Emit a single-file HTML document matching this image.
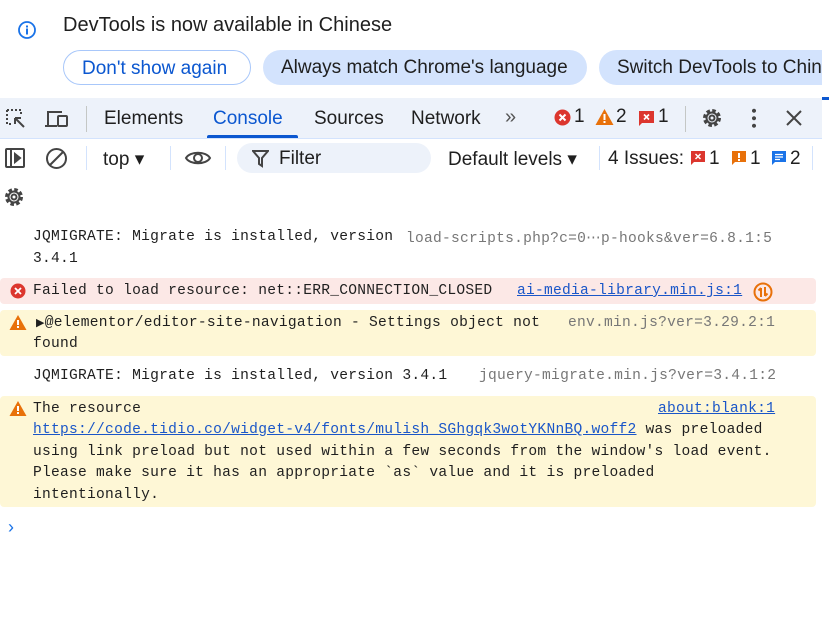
<!DOCTYPE html>
<html><head><meta charset="utf-8"><style>
body{margin:0;width:829px;height:633px;overflow:hidden;background:#fff;font-family:"Liberation Sans",sans-serif;position:relative}
.a{position:absolute;white-space:nowrap}
.ui{font-size:18px;color:#1f1f1f}
.pill{position:absolute;top:50px;height:35px;border-radius:18px;font-size:19px;line-height:35px;box-sizing:border-box;padding:0 18px;white-space:nowrap}
.mono{font-family:"Liberation Mono",monospace;font-size:14.6px;letter-spacing:0.25px;color:#1f1f1f}
.src{color:#777}
.lnk{color:#1a56c8;text-decoration:underline}
.row{position:absolute;left:0;width:816px}
</style></head><body>
<svg width="0" height="0" style="position:absolute"><defs><g id="gear"><circle cx="12" cy="12" r="7" fill="none" stroke="#444" stroke-width="4" stroke-dasharray="3.3 2.2"/><circle cx="12" cy="12" r="5.5" fill="none" stroke="#444" stroke-width="2"/><circle cx="12" cy="12" r="2.5" fill="none" stroke="#444" stroke-width="2"/></g></defs></svg>
<!-- infobar -->
<svg class="a" style="left:17px;top:20px" width="20" height="20" viewBox="0 0 20 20"><circle cx="10" cy="10" r="8" fill="none" stroke="#1a73e8" stroke-width="1.8"/><rect x="9" y="8.5" width="2" height="6" fill="#1a73e8"/><rect x="9" y="5.5" width="2" height="2" fill="#1a73e8"/></svg>
<div class="a" style="left:63px;top:14px;font-size:20px;color:#1f1f1f">DevTools is now available in Chinese</div>
<div class="pill" style="left:63px;width:188px;border:1px solid #a8c7fa;color:#0b57d0">Don't show again</div>
<div class="pill" style="left:263px;width:324px;background:#d3e3fd;color:#1f1f1f">Always match Chrome's language</div>
<div class="pill" style="left:599px;width:260px;background:#d3e3fd;color:#1f1f1f">Switch DevTools to Chinese</div>
<div class="a" style="left:822px;top:0;width:7px;height:97px;background:#fff"></div>
<div class="a" style="left:822px;top:97px;width:7px;height:3px;background:#0b57d0"></div>
<!-- tab bar -->
<div class="a" style="left:0;top:98px;width:822px;height:40px;background:#edf2fa;border-bottom:1px solid #d3e3fd"></div>
<svg class="a" style="left:4px;top:107px" width="24" height="24" viewBox="0 0 24 24" fill="none" stroke="#444" stroke-width="2"><path d="M3 3h14v6M3 3v14h6" stroke-dasharray="2 2"/><path d="M11 11l9 9M11 11h6M11 11v6"/></svg>
<svg class="a" style="left:44px;top:107px" width="26" height="24" viewBox="0 0 26 24" fill="none" stroke="#444" stroke-width="2"><path d="M4 19V5h14"/><path d="M1 19h12"/><rect x="14" y="9" width="9" height="10" rx="1"/></svg>
<div class="a" style="left:86px;top:106px;width:1px;height:26px;background:#c4c7c5"></div>
<div class="a ui" style="left:104px;top:108px;font-size:19px">Elements</div>
<div class="a ui" style="left:213px;top:108px;font-size:19px;color:#0b57d0">Console</div>
<div class="a" style="left:207px;top:135px;width:91px;height:3px;background:#0b57d0;border-radius:2px 2px 0 0"></div>
<div class="a ui" style="left:314px;top:108px;font-size:19px">Sources</div>
<div class="a ui" style="left:411px;top:108px;font-size:19px">Network</div>
<div class="a ui" style="left:505px;top:106px;font-size:20px;color:#555">»</div>
<svg class="a" style="left:554px;top:109px" width="17" height="17"><circle cx="8.5" cy="8.5" r="8" fill="#dc362e"/><path d="M5.5 5.5l6 6M11.5 5.5l-6 6" stroke="#fff" stroke-width="2"/></svg>
<div class="a ui" style="left:574px;top:106px;font-size:19px">1</div>
<svg class="a" style="left:595px;top:108px" width="19" height="18"><path d="M9.5 1L18.5 17H.5z" fill="#e8710a"/><rect x="8.5" y="6" width="2" height="6" fill="#fff"/><rect x="8.5" y="13" width="2" height="2" fill="#fff"/></svg>
<div class="a ui" style="left:616px;top:106px;font-size:19px">2</div>
<svg class="a" style="left:638px;top:110px" width="17" height="17"><path d="M1 1h15v12H4l-3 3z" fill="#dc362e"/><path d="M6 4.5l5 5M11 4.5l-5 5" stroke="#fff" stroke-width="1.6"/></svg>
<div class="a ui" style="left:658px;top:106px;font-size:19px">1</div>
<div class="a" style="left:685px;top:106px;width:1px;height:26px;background:#c4c7c5"></div>
<svg class="a" style="left:700px;top:106px" width="24" height="24"><use href="#gear"/></svg>
<div class="a" style="left:752px;top:107px;width:4px;height:22px;background:radial-gradient(circle,#444 1.8px,transparent 2.2px) 0 0/4px 7.5px"></div>
<svg class="a" style="left:785px;top:109px" width="18" height="18" stroke="#444" stroke-width="2"><path d="M2 2l14 14M16 2L2 16"/></svg>
<!-- console toolbar -->
<svg class="a" style="left:4px;top:147px" width="22" height="22" fill="none" stroke="#444" stroke-width="2"><rect x="2" y="2" width="18" height="18" rx="1"/><path d="M7 2v18"/><path d="M11 7l5 4-5 4z" fill="#444"/></svg>
<svg class="a" style="left:45px;top:147px" width="23" height="23" fill="none" stroke="#444" stroke-width="2"><circle cx="11.5" cy="11.5" r="9.5"/><path d="M18 5L5 18"/></svg>
<div class="a" style="left:86px;top:146px;width:1px;height:24px;background:#d3e3fd"></div>
<div class="a ui" style="left:103px;top:148px;font-size:19px">top ▾</div>
<div class="a" style="left:170px;top:146px;width:1px;height:24px;background:#d3e3fd"></div>
<svg class="a" style="left:184px;top:148px" width="28" height="20" fill="none" stroke="#444" stroke-width="2"><path d="M2 10C6 3 22 3 26 10C22 17 6 17 2 10z"/><circle cx="14" cy="10" r="4"/></svg>
<div class="a" style="left:225px;top:146px;width:1px;height:24px;background:#d3e3fd"></div>
<div class="a" style="left:237px;top:143px;width:194px;height:30px;border-radius:15px;background:#edf2fa"></div>
<svg class="a" style="left:252px;top:149px" width="17" height="19" fill="none" stroke="#444" stroke-width="2"><path d="M1 2h15l-6 7v8l-3-2V9z"/></svg>
<div class="a ui" style="left:279px;top:148px;font-size:19px">Filter</div>
<div class="a ui" style="left:448px;top:148px;font-size:19px">Default levels ▾</div>
<div class="a" style="left:599px;top:146px;width:1px;height:24px;background:#d3e3fd"></div>
<div class="a ui" style="left:608px;top:148px;font-size:19px">4 Issues:</div>
<svg class="a" style="left:690px;top:150px" width="16" height="16"><path d="M1 1h14v11H4l-3 3z" fill="#dc362e"/><path d="M5.5 4l5 5M10.5 4l-5 5" stroke="#fff" stroke-width="1.5"/></svg>
<div class="a ui" style="left:709px;top:148px;font-size:19px">1</div>
<svg class="a" style="left:731px;top:150px" width="16" height="16"><path d="M1 1h14v11H4l-3 3z" fill="#e8710a"/><rect x="7" y="3" width="2" height="5" fill="#fff"/><rect x="7" y="9" width="2" height="2" fill="#fff"/></svg>
<div class="a ui" style="left:750px;top:148px;font-size:19px">1</div>
<svg class="a" style="left:771px;top:150px" width="16" height="16"><path d="M1 1h14v11H4l-3 3z" fill="#1a73e8"/><path d="M4 4.5h8M4 7h8M4 9.5h5" stroke="#fff" stroke-width="1.3"/></svg>
<div class="a ui" style="left:790px;top:148px;font-size:19px">2</div>
<div class="a" style="left:812px;top:146px;width:1px;height:24px;background:#d3e3fd"></div>
<svg class="a" style="left:2px;top:185px" width="24" height="24"><use href="#gear"/></svg>
<!-- messages -->
<div class="a mono" style="left:33px;top:229px">JQMIGRATE: Migrate is installed, version</div>
<div class="a mono src" style="left:406px;top:229px">load-scripts.php?c=0⋯p-hooks&amp;ver=6.8.1:5</div>
<div class="a mono" style="left:33px;top:251px">3.4.1</div>
<div class="row" style="top:278px;height:26px;background:#fce8e6;border-radius:4px"></div>
<svg class="a" style="left:10px;top:283px" width="16" height="16"><circle cx="8" cy="8" r="7.5" fill="#dc362e"/><path d="M5 5l6 6M11 5l-6 6" stroke="#fff" stroke-width="1.8"/></svg>
<div class="a mono" style="left:33px;top:283px">Failed to load resource: net::ERR_CONNECTION_CLOSED</div>
<div class="a mono lnk" style="left:517px;top:283px">ai-media-library.min.js:1</div>
<svg class="a" style="left:753px;top:282px" width="20" height="20" fill="none" stroke="#e8710a" stroke-width="2"><circle cx="10" cy="10" r="8.5"/><path d="M8 15V6M5.5 8.5L8 6M12 5v9M14.5 11.5L12 14"/></svg>
<div class="row" style="top:310px;height:46px;background:#fef7d6;border-radius:4px"></div>
<svg class="a" style="left:9px;top:314px" width="18" height="17"><path d="M9 1L17.5 16H.5z" fill="#e8710a"/><rect x="8" y="6" width="2" height="5" fill="#fff"/><rect x="8" y="12" width="2" height="2" fill="#fff"/></svg>
<div class="a mono" style="left:36px;top:315px"><span style="font-size:11px">▶</span>@elementor/editor-site-navigation - Settings object not</div>
<div class="a mono src" style="left:568px;top:315px">env.min.js?ver=3.29.2:1</div>
<div class="a mono" style="left:33px;top:336px">found</div>
<div class="a mono" style="left:33px;top:368px">JQMIGRATE: Migrate is installed, version 3.4.1</div>
<div class="a mono src" style="left:479px;top:368px">jquery-migrate.min.js?ver=3.4.1:2</div>
<div class="row" style="top:396px;height:111px;background:#fef7d6;border-radius:4px"></div>
<svg class="a" style="left:9px;top:400px" width="18" height="17"><path d="M9 1L17.5 16H.5z" fill="#e8710a"/><rect x="8" y="6" width="2" height="5" fill="#fff"/><rect x="8" y="12" width="2" height="2" fill="#fff"/></svg>
<div class="a mono" style="left:33px;top:401px">The resource</div>
<div class="a mono lnk" style="left:658px;top:401px">about:blank:1</div>
<div class="a mono" style="left:33px;top:422px"><span class="lnk">https://code.tidio.co/widget-v4/fonts/mulish_SGhgqk3wotYKNnBQ.woff2</span> was preloaded</div>
<div class="a mono" style="left:33px;top:444px">using link preload but not used within a few seconds from the window's load event.</div>
<div class="a mono" style="left:33px;top:465px">Please make sure it has an appropriate `as` value and it is preloaded</div>
<div class="a mono" style="left:33px;top:487px">intentionally.</div>
<div class="a" style="left:8px;top:517px;font-size:18px;color:#1a73e8">›</div>
</body></html>
